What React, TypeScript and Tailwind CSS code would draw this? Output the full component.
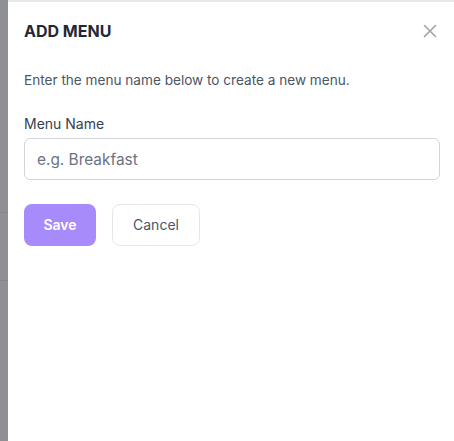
import React from "react";

export default function App() {
  return (
    <div className="flex h-[441px] w-[454px] overflow-hidden bg-white" style={{ fontFamily: "Inter, 'Noto Sans', sans-serif" }}>
      <div className="flex w-[8px] shrink-0 flex-col bg-[#8f9095]">
        <div className="h-[213px] border-b border-[#85868b]" />
        <div className="h-[68px] border-b border-[#85868b]" />
        <div className="flex-1" />
      </div>
      <div className="flex flex-1 flex-col border-t-2 border-[#e5e7eb] pl-4 pr-[14px]">
        <div className="flex h-[55px] items-center justify-between pt-[3px]">
          <h2 className="text-base font-bold text-[#1f2937]">ADD MENU</h2>
          <button className="mr-[3px] text-[#9ca3af]">
            <svg width="14" height="14" viewBox="0 0 14 14" fill="none" stroke="currentColor" strokeWidth="1.6" strokeLinecap="round">
              <path d="M1.5 1.5l11 11M12.5 1.5l-11 11" />
            </svg>
          </button>
        </div>
        <p className="mt-[13px] text-[13.6px] leading-5 text-[#4b5563]">Enter the menu name below to create a new menu.</p>
        <label className="mt-[24px] text-sm leading-5 text-[#374151]">Menu Name</label>
        <input
          className="mt-[4px] h-[42px] w-full rounded-md border border-[#d1d5db] px-3 text-[15.4px] text-[#374151] outline-none placeholder:text-[#6b7280]"
          placeholder="e.g. Breakfast"
        />
        <div className="mt-6 flex gap-4">
          <button className="h-[42px] w-[72px] rounded-lg bg-[#a78bfa] text-sm font-semibold text-white">Save</button>
          <button className="h-[42px] w-[88px] rounded-lg border border-[#e5e7eb] bg-white text-sm text-[#4b5563]">Cancel</button>
        </div>
      </div>
    </div>
  );
}
